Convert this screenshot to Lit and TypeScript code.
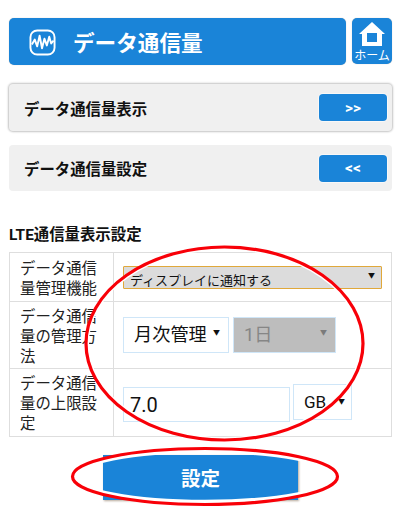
import { LitElement, html, css, svg } from "lit";
import { customElement } from "lit/decorators.js";

@customElement("app-root")
export class AppRoot extends LitElement {
  static styles = css`
    :host {
      display: block;
      position: relative;
      width: 400px;
      height: 528px;
      overflow: hidden;
      background: #fff;
      font-family: Roboto, "Noto Sans CJK JP", sans-serif;
      color: #111;
    }
    .page { display: flex; flex-direction: column; padding: 18px 8px 0 9px; }
    .head { display: flex; gap: 6px; height: 47px; }
    .title {
      flex: 1; display: flex; align-items: center; gap: 17px; padding-left: 20px;
      background: #1a84d8; border-radius: 5px; color: #fff; font-size: 21.6px; font-weight: 700;
      box-shadow: 0 0 1px #c9b8a8;
    }
    .title svg { width: 27px; height: 27px; margin-top: 1px; }
    .home {
      width: 40px; height: 46px; background: #1a84d8; border-radius: 5px; color: #fff;
      display: flex; flex-direction: column; align-items: center; font-size: 12px; line-height: 14px;
      box-shadow: 0 0 1px #c9b8a8; white-space: nowrap;
    }
    .home svg { width: 26px; height: 24px; margin-top: 4px; margin-bottom: 3px; }
    .row {
      display: flex; align-items: center; justify-content: space-between;
      height: 46px; background: #f0f0f0; border-radius: 4px; padding: 0 5px 0 15px;
      font-size: 15.4px; font-weight: 700;
    }
    .row.a { margin-top: 19px; height: 47px; box-shadow: 0 0 2px 1px #c4c4c4; }
    .row.b { margin-top: 14px; }
    .go {
      width: 68px; height: 27px; background: #1a84d8; border-radius: 4px; color: #fff;
      display: flex; align-items: center; justify-content: center;
      font-size: 15.5px; font-weight: 700; box-shadow: 0 0 0 1px #f8f8f8;
    }
    h2 { margin: 34px 0 7px; font-size: 15.4px; line-height: 20px; font-weight: 700; }
    table { border-collapse: collapse; width: 383px; table-layout: fixed; font-size: 15.4px; line-height: 20px; }
    td { border: 1px solid #dedede; padding: 0; height: 48px; }
    td.l { width: 104px; box-sizing: border-box; padding: 3px 4px 0 10px; color: #222; }
    tr.r2 td { height: 66px; }
    tr.r3 td { height: 67px; }
    td.v { padding-left: 9px; }
    .line { display: flex; align-items: center; gap: 4px; }
    .line.top { align-items: flex-start; gap: 3px; }
    .sel1 {
      width: 259px; height: 23px; box-sizing: border-box; border: 1px solid #e0a83a; background: #dcdcdc;
      display: flex; align-items: flex-end; justify-content: space-between; padding: 0 6px 0 6px;
      font-size: 13px; line-height: 18px; border-radius: 1px;
    }
    .sel1 .label { margin-bottom: -2px; }
    .arrow { font-size: 7px; line-height: 10px; align-self: flex-start; margin-top: 4px; }
    .box {
      box-sizing: border-box; height: 36px; border: 1px solid #cfe6f8; background: #fff;
      display: flex; align-items: center; font-size: 18.2px; padding-left: 10px; position: relative;
    }
    .m { width: 106px; }
    .d { width: 103px; background: #bdbdbd; color: #868686; }
    .txt { width: 167px; height: 35px; padding-left: 6px; font-size: 20px; margin-top: 4px; }
    .gb { width: 59px; height: 36px; padding-left: 10px; font-size: 17px; margin-top: 1px; }
    .tri { position: absolute; right: 8px; top: 9px; font-size: 7px; line-height: 12px; }
    .d .tri { color: #7b7b7b; }
    .gb .tri { right: 6px; top: 11px; }
    .btn {
      align-self: flex-start; margin: 18px 0 0 94px; width: 195px; height: 45px;
      background: #1a84d8; color: #fff; font-size: 19.5px; font-weight: 700;
      display: flex; align-items: center; justify-content: center;
      box-shadow: 1px 1px 2px #b8aa9c;
    }
    .marks { position: absolute; inset: 0; width: 400px; height: 528px; pointer-events: none; }
  `;

  render() {
    return html`
      <div class="page">
        <div class="head">
          <div class="title">
            <svg viewBox="0 0 28 28" fill="none" stroke="#fff">
              <rect x="1.5" y="1.5" width="25" height="25" rx="7" stroke-width="2"/>
              <path d="M3 16 L6 11 L8.5 18 L11 7 L13.5 20 L16 10 L18.5 17 L21 8 L23 15 L25.5 12" stroke-width="2" stroke-linejoin="round"/>
            </svg>
            <span>データ通信量</span>
          </div>
          <div class="home">
            <svg viewBox="0 0 26 24">
              <path fill="#fff" fill-rule="evenodd" d="M13 0 L26 12 H23 V24 H3 V12 H0 Z M8 11 V20 H18 V11 Z"/>
            </svg>
            <span>ホーム</span>
          </div>
        </div>
        <div class="row a"><span>データ通信量表示</span><span class="go">&gt;&gt;</span></div>
        <div class="row b"><span>データ通信量設定</span><span class="go">&lt;&lt;</span></div>
        <h2>LTE通信量表示設定</h2>
        <table>
          <tr>
            <td class="l">データ通信量管理機能</td>
            <td class="v"><div class="sel1"><span class="label">ディスプレイに通知する</span><span class="arrow">▼</span></div></td>
          </tr>
          <tr class="r2">
            <td class="l">データ通信量の管理方法</td>
            <td class="v"><div class="line">
              <div class="box m">月次管理<span class="tri">▼</span></div>
              <div class="box d">1日<span class="tri">▼</span></div>
            </div></td>
          </tr>
          <tr class="r3">
            <td class="l">データ通信量の上限設定</td>
            <td class="v"><div class="line top">
              <div class="box txt">7.0</div>
              <div class="box gb">GB<span class="tri">▼</span></div>
            </div></td>
          </tr>
        </table>
        <div class="btn">設定</div>
      </div>
      <svg class="marks" viewBox="0 0 400 528" fill="none">
        ${svg`<ellipse cx="224.5" cy="343.5" rx="136.5" ry="94.5" stroke="#fff" stroke-width="2"/>
        <ellipse cx="205" cy="476.5" rx="130" ry="25" stroke="#fff" stroke-width="3.5"/>
        <ellipse cx="224.5" cy="343.5" rx="138.5" ry="96.5" stroke="#f80008" stroke-width="3.2"/>
        <ellipse cx="205" cy="476.5" rx="132.5" ry="28" stroke="#f80008" stroke-width="3.2"/>`}
      </svg>
    `;
  }
}
